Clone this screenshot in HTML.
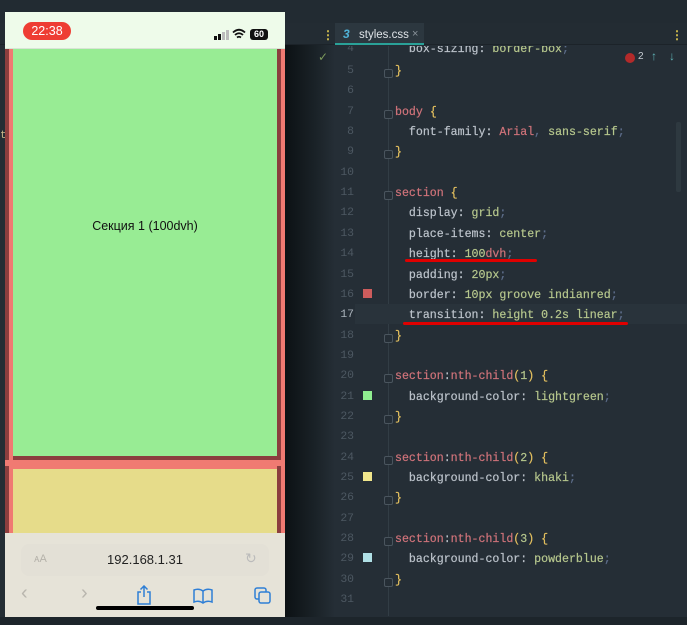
<!DOCTYPE html>
<html><head><meta charset="utf-8"><style>
*{margin:0;padding:0;box-sizing:border-box}
body{width:687px;height:625px;overflow:hidden;background:#252e36;position:relative;font-family:"Liberation Sans",sans-serif}
.abs{position:absolute}
.code{font-family:"Liberation Mono",monospace;font-size:11.6px;color:#bcc3cb;white-space:pre;-webkit-text-stroke:0.2px currentColor}
.ln{position:absolute;left:330px;width:24px;text-align:right;font-family:"Liberation Mono",monospace;font-size:11.4px;color:#4d5862}
.k{color:#d0737a}.s{color:#b6c78d}.y{color:#e5c15f}.p{color:#5d6d8a}
.fold{position:absolute;left:384px;width:9px;height:9px;border:1px solid #4a555e;border-radius:2px;background:#252e36}
</style></head><body>
<div class="abs" style="left:0;top:0;width:687px;height:23px;background:#222b32"></div>
<div class="abs" style="left:0;top:23px;width:687px;height:22px;background:#232c33;border-bottom:1px solid #1c2329"></div>
<div class="abs" style="left:285px;top:45px;width:50px;height:580px;background:linear-gradient(90deg,#0c1114,#1a2227 60%,#252e36)"></div>
<div class="abs" style="left:0;top:45px;width:10px;height:580px;background:#242d34"></div>
<div class="abs" style="left:0;top:130px;color:#c8b98a;font-family:'Liberation Mono',monospace;font-size:11px">t</div>
<div class="abs" style="left:335px;top:23px;width:89px;height:22px;background:#2c373f;border-bottom:2px solid #2aa198"></div>
<div class="abs" style="left:343px;top:27px;color:#4fb3d8;font-size:12px;font-weight:bold;font-style:italic">3</div>
<div class="abs" style="left:359px;top:29px;color:#dfe3e7;font-size:11.5px">styles.css</div>
<div class="abs" style="left:412px;top:28px;color:#8a939b;font-size:11px">×</div>
<div class="abs" style="left:322px;top:28px;color:#d7c24e;font-size:12px;font-weight:bold">⋮</div>
<div class="abs" style="left:671px;top:28px;color:#d7c24e;font-size:12px;font-weight:bold">⋮</div>
<div class="abs" style="left:318px;top:50px;color:#7c9a5c;font-size:12px">✓</div>
<div class="abs" style="left:625px;top:53px;width:10px;height:10px;border-radius:50%;background:#b32a2a"></div>
<div class="abs" style="left:638px;top:51px;color:#c6ccd2;font-size:10px">2</div>
<div class="abs" style="left:651px;top:49px;color:#5fb2b5;font-size:12px">↑</div>
<div class="abs" style="left:669px;top:49px;color:#5fb2b5;font-size:12px">↓</div>
<div class="abs" style="left:676px;top:122px;width:5px;height:70px;background:#2e3940;border-radius:2px"></div>
<div class="abs" style="left:388px;top:46px;width:1px;height:570px;background:#323d45"></div>
<div class="abs" style="left:355px;top:304px;width:332px;height:20px;background:#29333b"></div>
<div class="abs" style="left:0;top:617px;width:687px;height:8px;background:#1d252b"></div>

<div id="lines"></div>
<script>
var L={4:'  box-sizing: <span class="s">border-box</span><span class="p">;</span>',5:'<span class="y">}</span>',6:'',7:'<span class="k">body</span> <span class="y">{</span>',8:'  font-family: <span class="k">Arial</span><span class="p">,</span> <span class="s">sans-serif</span><span class="p">;</span>',9:'<span class="y">}</span>',10:'',11:'<span class="k">section</span> <span class="y">{</span>',12:'  display: <span class="s">grid</span><span class="p">;</span>',13:'  place-items: <span class="s">center</span><span class="p">;</span>',14:'  height: <span class="s">100</span><span class="k">dvh</span><span class="p">;</span>',15:'  padding: <span class="s">20px</span><span class="p">;</span>',16:'  border: <span class="s">10px groove indianred</span><span class="p">;</span>',17:'  transition: <span class="s">height 0.2s linear</span><span class="p">;</span>',18:'<span class="y">}</span>',19:'',20:'<span class="k">section</span>:<span class="k">nth-child</span><span class="y">(</span><span class="s">1</span><span class="y">)</span> <span class="y">{</span>',21:'  background-color: <span class="s">lightgreen</span><span class="p">;</span>',22:'<span class="y">}</span>',23:'',24:'<span class="k">section</span>:<span class="k">nth-child</span><span class="y">(</span><span class="s">2</span><span class="y">)</span> <span class="y">{</span>',25:'  background-color: <span class="s">khaki</span><span class="p">;</span>',26:'<span class="y">}</span>',27:'',28:'<span class="k">section</span>:<span class="k">nth-child</span><span class="y">(</span><span class="s">3</span><span class="y">)</span> <span class="y">{</span>',29:'  background-color: <span class="s">powderblue</span><span class="p">;</span>',30:'<span class="y">}</span>',31:''};
var folds=[5,7,9,11,18,20,22,24,26,28,30];
var h='';
for(var n=4;n<=31;n++){var y=70+(n-5)*20.35-5;if(n==4)y=43;
h+='<div class="ln" style="top:'+y+'px;'+(n==17?'color:#aab3bb':'')+(n==4?'clip-path:inset(3px 0 0 0)':'')+'">'+n+'</div>';
if(folds.indexOf(n)>=0)h+='<div class="fold" style="top:'+(y+4)+'px"></div>';
h+='<div class="abs code" style="left:395px;top:'+y+'px;'+(n==4?'clip-path:inset(3px 0 0 0)':'')+'">'+L[n]+'</div>';}
document.getElementById('lines').innerHTML=h;
</script>
<div class="abs" style="left:363px;top:289px;width:9px;height:9px;background:#cd5c5c"></div>
<div class="abs" style="left:363px;top:391px;width:9px;height:9px;background:#90ee90"></div>
<div class="abs" style="left:363px;top:472px;width:9px;height:9px;background:#f0e68c"></div>
<div class="abs" style="left:363px;top:553px;width:9px;height:9px;background:#b0e0e6"></div>
<div class="abs" style="left:405px;top:259px;width:132px;height:3px;background:#e00000;border-radius:2px"></div>
<div class="abs" style="left:403px;top:322px;width:225px;height:3px;background:#e00000;border-radius:2px"></div>

<!-- phone -->
<div class="abs" style="left:5px;top:12px;width:280px;height:605px;background:#eef9ea;overflow:hidden">
 <div class="abs" style="left:0;top:37px;width:4px;height:568px;background:#8b3e3e"></div>
 <div class="abs" style="left:4px;top:37px;width:4px;height:568px;background:#f07a72"></div>
 <div class="abs" style="left:272px;top:37px;width:4px;height:568px;background:#8b3e3e"></div>
 <div class="abs" style="left:276px;top:37px;width:4px;height:568px;background:#f07a72"></div>
 <div class="abs" style="left:8px;top:37px;width:264px;height:407px;background:#98ec94"></div>
 <div class="abs" style="left:8px;top:444px;width:264px;height:4px;background:#8b3e3e"></div>
 <div class="abs" style="left:0;top:448px;width:280px;height:6px;background:#f07a72"></div>
 <div class="abs" style="left:8px;top:454px;width:264px;height:3px;background:#f07a72"></div>
 <div class="abs" style="left:8px;top:457px;width:264px;height:80px;background:#e6dc8a"></div>
 <div class="abs" style="left:0;top:0;width:280px;height:37px;background:#eefbea;border-bottom:1px solid #d8e4d4"></div>
 <div class="abs" style="left:18px;top:10px;width:48px;height:18px;border-radius:9px;background:#ee3d33;color:#fff;font-size:12.5px;text-align:center;line-height:18px">22:38</div>
 <div class="abs" style="left:209px;top:24px;width:3px;height:4px;background:#111"></div>
 <div class="abs" style="left:213px;top:22px;width:3px;height:6px;background:#111"></div>
 <div class="abs" style="left:217px;top:20px;width:3px;height:8px;background:#bbb"></div>
 <div class="abs" style="left:221px;top:18px;width:3px;height:10px;background:#bbb"></div>
 <svg class="abs" style="left:227px;top:16px" width="14" height="12" viewBox="0 0 14 12"><path d="M1 4.5Q7 -1 13 4.5M3 7Q7 3.5 11 7M5 9.5Q7 8 9 9.5" stroke="#111" stroke-width="1.8" fill="none"/></svg>
 <div class="abs" style="left:245px;top:17px;width:18px;height:11px;border-radius:3px;background:#111;color:#fff;font-size:9px;font-weight:bold;text-align:center;line-height:11px">60</div>
 <div class="abs" style="left:0;top:521px;width:280px;height:84px;background:#e6e3d8"></div>
 <div class="abs" style="left:16px;top:532px;width:248px;height:32px;border-radius:8px;background:#e3e0d6"></div>
 <div class="abs" style="left:29px;top:541px;color:#b5b2aa;font-size:11px">ᴀA</div>
 <div class="abs" style="left:0;top:540px;width:280px;text-align:center;color:#222;font-size:13px">192.168.1.31</div>
 <div class="abs" style="left:240px;top:538px;color:#bbb;font-size:14px">↻</div>
 <div class="abs" style="left:16px;top:570px;color:#b9b6ae;font-size:20px">‹</div>
 <div class="abs" style="left:76px;top:570px;color:#b9b6ae;font-size:20px">›</div>
 <svg class="abs" style="left:131px;top:573px" width="16" height="20" viewBox="0 0 16 20"><path d="M8 1V12M4.5 4.5L8 1L11.5 4.5M5 7H2V19H14V7H11" stroke="#2f7fd6" stroke-width="1.5" fill="none"/></svg>
 <svg class="abs" style="left:188px;top:576px" width="20" height="16" viewBox="0 0 20 16"><path d="M10 3Q6 0 1 2V14Q6 12 10 15Q14 12 19 14V2Q14 0 10 3V15" stroke="#2f7fd6" stroke-width="1.5" fill="none"/></svg>
 <svg class="abs" style="left:249px;top:575px" width="18" height="18" viewBox="0 0 18 18"><rect x="1" y="1" width="11" height="11" rx="2" stroke="#2f7fd6" stroke-width="1.5" fill="none"/><rect x="5" y="5" width="11" height="11" rx="2" stroke="#2f7fd6" stroke-width="1.5" fill="#e6e3d8"/></svg>
 <div class="abs" style="left:91px;top:594px;width:98px;height:4px;border-radius:2px;background:#000"></div>
</div>
<div class="abs" style="left:0;top:219px;width:290px;text-align:center;color:#111;font-size:12.5px">Секция 1 (100dvh)</div>
</body></html>
